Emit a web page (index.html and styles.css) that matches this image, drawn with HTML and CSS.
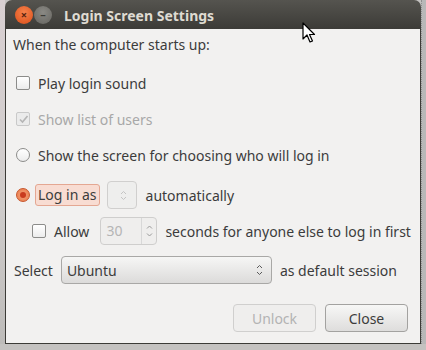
FILE: index.html
```html
<!DOCTYPE html>
<html lang="en">
<head>
    <meta charset="UTF-8">
    <title>Login Screen Settings</title>
    <link rel="stylesheet" href="styles.css">
</head>
<body>

<div class="desktop">
    <div class="side-left"></div>

    <div class="window">
        <!-- title bar -->
        <div class="titlebar">
            <span class="wbtn close-btn">&#215;</span>
            <span class="wbtn min-btn">&#8211;</span>
            <span class="title">Login Screen Settings</span>
        </div>

        <div class="content">
            <div class="heading">When the computer starts up:</div>

            <div class="row row-sound">
                <span class="check"></span>
                <span>Play login sound</span>
            </div>

            <div class="row row-users disabled">
                <span class="check checked">
                    <svg width="11" height="11" viewBox="0 0 11 11"><path d="M2 5.5 L4.5 8 L9.5 2" fill="none" stroke="#b5b5b5" stroke-width="1.6"/></svg>
                </span>
                <span>Show list of users</span>
            </div>

            <div class="row row-choose">
                <span class="radio"></span>
                <span>Show the screen for choosing who will log in</span>
            </div>

            <div class="row row-auto">
                <span class="radio on"><span class="dot"></span></span>
                <span class="focus-label">Log in as</span>
                <span class="spin-empty">
                    <svg width="7" height="11" viewBox="0 0 7 11"><path d="M1 4 L3.5 1.5 L6 4 M1 7 L3.5 9.5 L6 7" fill="none" stroke="#c4c4c4" stroke-width="1"/></svg>
                </span>
                <span>automatically</span>
            </div>

            <div class="row row-allow">
                <span class="check"></span>
                <span class="allow">Allow</span>
                <span class="spin">
                    <span class="spin-entry">30</span>
                    <span class="spin-btns">
                        <svg width="7" height="14" viewBox="0 0 7 14"><path d="M1 4.5 L3.5 2 L6 4.5 M1 9.5 L3.5 12 L6 9.5" fill="none" stroke="#9a9a9a" stroke-width="1"/></svg>
                    </span>
                </span>
                <span>seconds for anyone else to log in first</span>
            </div>

            <div class="row row-session">
                <span class="select-label">Select</span>
                <span class="combo">
                    <span>Ubuntu</span>
                    <svg width="7" height="12" viewBox="0 0 7 12"><path d="M1 4 L3.5 1.5 L6 4 M1 8 L3.5 10.5 L6 8" fill="none" stroke="#5a5a5a" stroke-width="1"/></svg>
                </span>
                <span>as default session</span>
            </div>

            <div class="buttons">
                <span class="btn btn-disabled">Unlock</span>
                <span class="btn">Close</span>
            </div>
        </div>
    </div>

    <div class="side-right"></div>
</div>

<!-- mouse pointer -->
<svg class="pointer" width="14" height="22" viewBox="0 0 14 22">
    <path d="M1 1 L1 17 L5 13 L8 20 L10.5 19 L7.5 12.5 L12.5 12.5 Z" fill="#ffffff" stroke="#000000" stroke-width="1.2" stroke-linejoin="round"/>
</svg>

</body>
</html>
```

FILE: styles.css
```css
* {
    margin: 0;
    padding: 0;
    box-sizing: border-box;
}

body {
    font-family: 'Noto Sans', 'DejaVu Sans', sans-serif;
    font-size: 14px;
    color: #3c3c3c;
    background: #c4c2c0;
    width: 426px;
    height: 350px;
    overflow: hidden;
}

.desktop {
    display: flex;
    height: 344px;
}

.side-left {
    width: 5px;
    background: linear-gradient(180deg, #d9d0d2, #cfcccb 60%, #bdbbb9);
}

.side-right {
    width: 5px;
    background: #b8b8b8;
    border-left: 1px dotted #8e8e8e;
}

.window {
    width: 416px;
    display: flex;
    flex-direction: column;
}

.titlebar {
    height: 29px;
    background: linear-gradient(180deg, #55544f, #3c3b37);
    border-radius: 7px 7px 0 0;
    display: flex;
    align-items: center;
    padding-left: 10px;
}

.wbtn {
    width: 18px;
    height: 18px;
    border-radius: 50%;
    display: flex;
    align-items: center;
    justify-content: center;
    font-size: 11px;
    line-height: 1;
    font-weight: bold;
}

.close-btn {
    background: radial-gradient(circle at 50% 35%, #f5814a, #dc4f1a);
    color: #5a2510;
}

.min-btn {
    background: radial-gradient(circle at 50% 35%, #8a8984, #65645f);
    color: #3b3a36;
    margin-left: 1px;
}

.title {
    font-weight: bold;
    color: #dfdbd2;
    font-size: 14px;
    margin-left: 12px;
    margin-top: 1px;
}

.content {
    flex: 1;
    background: #f2f1f0;
    border-left: 1px solid #3c3b37;
    border-right: 1px solid #3c3b37;
    border-bottom: 1px solid #3c3b37;
    padding: 6px 0 0 7px;
}

.heading {
    height: 20px;
    line-height: 20px;
}

.row {
    display: flex;
    align-items: center;
    height: 24px;
}

.row-sound { margin-top: 16px; }
.row-users { margin-top: 12px; }
.row-choose { margin-top: 12px; }
.row-auto { margin-top: 14px; height: 28px; }
.row-allow { margin-top: 8px; height: 28px; padding-left: 16px; }
.row-session { margin-top: 11px; height: 28px; }

.disabled {
    color: #a8a8a8;
}

.check {
    width: 14px;
    height: 14px;
    border: 1px solid #8c8c8a;
    border-radius: 2px;
    background: linear-gradient(180deg, #ffffff, #ececec);
    margin: 0 8px 0 3px;
    display: flex;
    align-items: center;
    justify-content: center;
}

.check.checked {
    border-color: #c9c9c9;
    background: #ebebeb;
}

.radio {
    width: 14px;
    height: 14px;
    border: 1px solid #8c8c8a;
    border-radius: 50%;
    background: linear-gradient(180deg, #ffffff, #ececec);
    margin: 0 8px 0 3px;
    display: flex;
    align-items: center;
    justify-content: center;
}

.radio.on {
    border-color: #c8562c;
    background: radial-gradient(circle, #f3a27c, #ea7a47);
    margin-right: 5px;
}

.dot {
    width: 6px;
    height: 6px;
    border-radius: 50%;
    background: #c93b1e;
}

.focus-label {
    background: #f8dcd2;
    border: 1px solid #e4a792;
    border-radius: 3px;
    padding: 0 2px;
    height: 22px;
    line-height: 20px;
}

.spin-empty {
    width: 30px;
    height: 28px;
    margin: 0 9px 0 7px;
    border: 1px solid #d0cfce;
    border-radius: 4px;
    background: #eeeeed;
    display: flex;
    align-items: center;
    justify-content: flex-end;
    padding-right: 9px;
}

.allow {
    margin-right: 11px;
}

.spin {
    display: flex;
    height: 28px;
    width: 57px;
    margin-right: 8px;
    border: 1px solid #cfcecd;
    border-radius: 4px;
    background: #efeeed;
}

.spin-entry {
    flex: 1;
    color: #b5b5b5;
    padding-left: 5px;
    line-height: 26px;
    border-right: 1px solid #d8d8d8;
}

.spin-btns {
    width: 14px;
    display: flex;
    align-items: center;
    justify-content: center;
}

.select-label {
    margin: 0 8px 0 1px;
}

.combo {
    width: 211px;
    height: 28px;
    margin-right: 8px;
    border: 1px solid #a9a8a6;
    border-radius: 4px;
    background: linear-gradient(180deg, #f6f6f5, #dcdbda);
    display: flex;
    align-items: center;
    justify-content: space-between;
    padding: 0 8px 0 5px;
}

.buttons {
    display: flex;
    justify-content: flex-end;
    gap: 9px;
    margin-top: 20px;
    padding-right: 12px;
}

.btn {
    width: 83px;
    height: 28px;
    border: 1px solid #a3a2a0;
    border-radius: 4px;
    background: linear-gradient(180deg, #f7f7f6, #dedddc);
    display: flex;
    align-items: center;
    justify-content: center;
}

.btn-disabled {
    border-color: #d0cfce;
    background: #efeeed;
    color: #b3b3b3;
}

.pointer {
    position: absolute;
    left: 302px;
    top: 22px;
}
```
